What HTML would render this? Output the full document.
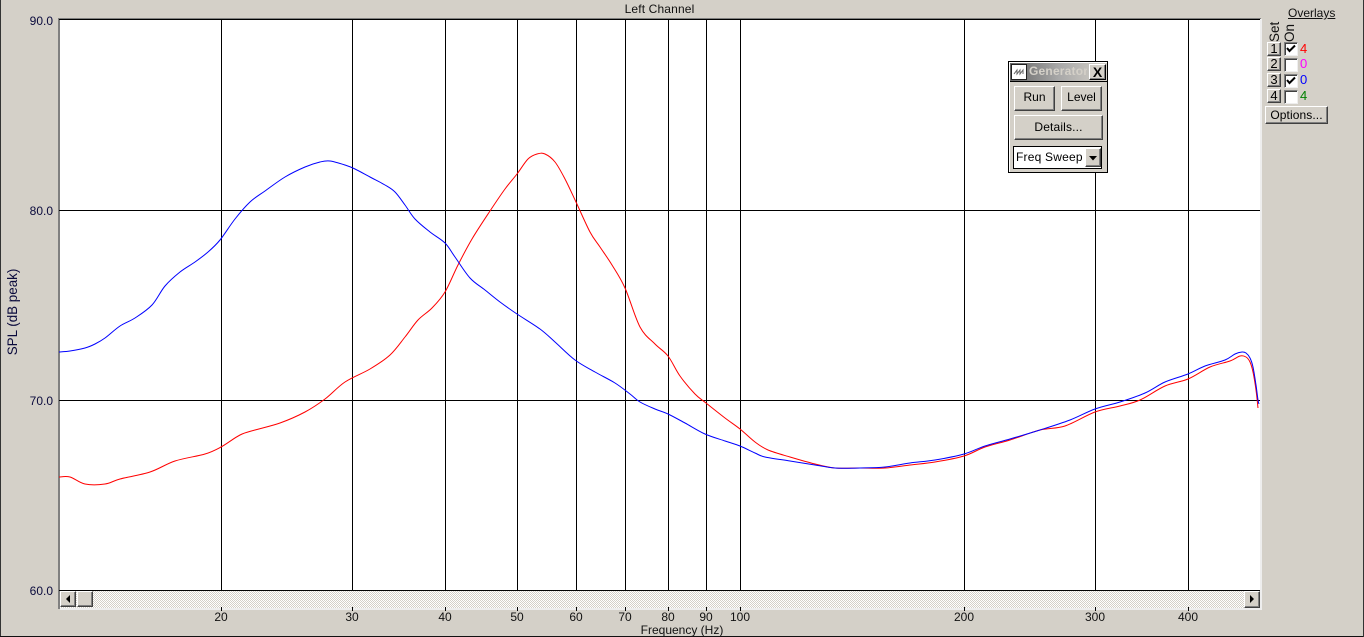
<!DOCTYPE html>
<html><head><meta charset="utf-8"><style>
html,body{margin:0;padding:0}
body{width:1364px;height:637px;overflow:hidden;position:relative;background:#d4d0c8;font:12px "Liberation Sans",Arial,sans-serif;color:#000}
.t{position:absolute;white-space:nowrap;line-height:14px}
.y{width:50px;text-align:right;left:3px;color:#0a0a3c}
.x{width:40px;text-align:center;top:610px;color:#111}
.b{position:absolute;box-sizing:border-box;background:#d4d0c8;border:1px solid;border-color:#fff #404040 #404040 #fff;box-shadow:inset -1px -1px 0 #808080;text-align:center;white-space:nowrap}
.c{position:absolute;left:1284px;width:14px;height:14px;box-sizing:border-box;background:#fff;border:1px solid;border-color:#808080 #eee #eee #808080;box-shadow:inset 1px 1px 0 #404040}
.n{font-size:13px}
</style></head><body>
<div style="position:absolute;left:0;top:0;width:1px;height:637px;background:#333"></div>
<div style="position:absolute;left:0;top:636px;width:1364px;height:1px;background:#111"></div>
<div style="position:absolute;left:1363px;top:0;width:1px;height:637px;background:#333"></div>
<svg width="1364" height="637" style="position:absolute;left:0;top:0">
<defs><pattern id="d" width="2" height="2" patternUnits="userSpaceOnUse"><rect width="2" height="2" fill="#fff"/><rect width="1" height="1" fill="#d4d0c8"/><rect x="1" y="1" width="1" height="1" fill="#d4d0c8"/></pattern></defs>
<rect x="58" y="18" width="2" height="591" fill="#808080"/>
<rect x="58" y="18" width="1203" height="1" fill="#808080"/>
<rect x="60" y="20" width="1200" height="571" fill="#fff"/>
<rect x="1260" y="19" width="2" height="590" fill="#eeeeee"/>
<rect x="60" y="608" width="1202" height="2" fill="#eeeeee"/>
<rect x="60" y="591" width="1200" height="17" fill="url(#d)"/>
<g shape-rendering="crispEdges" stroke="#000" stroke-width="1">
<path d="M59 19.5H1260M59 210.5H1260M59 400.5H1260M59 590.5H1260"/>
<path d="M221.500 20V591M352.500 20V591M445.500 20V591M517.500 20V591M576.500 20V591M625.500 20V591M668.500 20V591M706.500 20V591M740.500 20V591M964.500 20V591M1095.500 20V591M1188.500 20V591"/>
<path d="M221.500 607V611M352.500 607V611M445.500 607V611M517.500 607V611M576.500 607V611M625.500 607V611M668.500 607V611M706.500 607V611M740.500 607V611M964.500 607V611M1095.500 607V611M1188.500 607V611"/>
</g>
<path id="r" fill="none" stroke="#ff0000" stroke-width="1" data-p="59,477 70,477 85,484 105,484 120,479 150,472 175,461 205,454 221,447 240,435 255,430 280,423 305,412 325,399 345,382 370,369 390,355 405,337 418,320 432,308 445,292 458,265 472,239 490,211 505,189 517,174 528,159 537,154 545,154 555,162 565,179 576,202 590,232 600,247 612,265 625,288 640,327 655,344 668,356 680,376 695,394 706,403 725,418 740,429 755,442 768,450 790,457 815,464 835,468 860,468 885,468 910,465 935,462 964,456 985,447 1010,440 1040,430 1065,426 1095,412 1120,406 1140,400 1165,386 1188,379 1210,367 1230,361 1240,356 1246,357 1250,362 1253,372 1256,390 1258,408"/>
<path id="u" fill="none" stroke="#0000ff" stroke-width="1" data-p="59,352 70,351 85,348 95,344 105,338 120,326 135,318 152,305 165,286 180,272 195,262 208,252 220,240 235,219 250,202 265,191 285,177 305,167 320,162 330,161 345,165 355,169 370,177 385,185 395,192 405,205 415,219 430,232 445,243 455,257 470,278 485,290 500,302 517,314 540,329 555,342 575,360 595,372 615,383 630,394 640,402 655,409 668,414 685,423 705,434 725,441 740,446 755,453 765,457 790,461 815,465 835,468 860,468 885,467 910,463 935,460 964,454 985,446 1010,439 1040,430 1070,420 1095,409 1120,402 1145,393 1165,382 1188,374 1205,366 1225,360 1235,354 1242,352 1246,353 1250,358 1253,367 1256,385 1258,400 1259,404"/>
</svg>
<script>
['r','u'].forEach(function(id){var e=document.getElementById(id),p=e.getAttribute('data-p').split(' ').map(function(s){return s.split(',').map(Number)}),d='M'+p[0];
for(var i=0;i<p.length-1;i++){var a=p[i-1]||p[i],b=p[i],c=p[i+1],f=p[i+2]||c;
d+='C'+(b[0]+(c[0]-a[0])/6)+' '+(b[1]+(c[1]-a[1])/6)+' '+(c[0]-(f[0]-b[0])/6)+' '+(c[1]-(f[1]-b[1])/6)+' '+c[0]+' '+c[1];}
e.setAttribute('d',d);e.removeAttribute('data-p');});
</script>

<div class="t" style="left:560px;top:2px;width:199px;text-align:center;color:#111;letter-spacing:.15px">Left Channel</div>
<div class="t y" style="top:14px">90.0</div>
<div class="t y" style="top:204px">80.0</div>
<div class="t y" style="top:394px">70.0</div>
<div class="t y" style="top:584px">60.0</div>
<div class="t" style="left:-37px;top:305px;width:100px;text-align:center;transform:rotate(-90deg);color:#0a0a3c;font-size:13.400px">SPL (dB peak)</div>
<div class="t x" style="left:201px">20</div><div class="t x" style="left:332px">30</div><div class="t x" style="left:425px">40</div><div class="t x" style="left:497px">50</div><div class="t x" style="left:556px">60</div><div class="t x" style="left:605px">70</div><div class="t x" style="left:648px">80</div><div class="t x" style="left:686px">90</div><div class="t x" style="left:720px">100</div><div class="t x" style="left:944px">200</div><div class="t x" style="left:1075px">300</div><div class="t x" style="left:1168px">400</div>
<div class="t" style="left:582px;top:623px;width:200px;text-align:center;color:#111">Frequency (Hz)</div>

<div class="b" style="left:60px;top:591px;width:16px;height:16px"><svg width="14" height="14" style="position:absolute;left:0;top:0"><path d="M9 3V11L5 7Z" fill="#000"/></svg></div>
<div class="b" style="left:77px;top:591px;width:16px;height:16px"></div>
<div class="b" style="left:1244px;top:591px;width:16px;height:17px"><svg width="14" height="14" style="position:absolute;left:0;top:0"><path d="M5 3V11L9 7Z" fill="#000"/></svg></div>

<div style="position:absolute;left:1008px;top:61px;width:100px;height:112px;box-sizing:border-box;background:#d4d0c8;border:1px solid #000;box-shadow:inset 1px 1px 0 #fff">
  <div style="position:absolute;left:1px;top:1px;width:97px;height:18px;background:linear-gradient(90deg,#666,#a8a8a8 50%,#d4d0c8);border-bottom:1px solid #000;box-sizing:content-box"></div>
  <div style="position:absolute;left:2px;top:2px;width:16px;height:16px;background:#fff;border:1px solid #222;box-sizing:border-box"><svg width="14" height="14" style="position:absolute;left:0;top:0"><path d="M2 9L5 5V9L8 5V9L11 5V9" fill="none" stroke="#666" stroke-width="1"/></svg></div>
  <div class="t" style="left:20px;top:2px;font-weight:bold;color:#d4d0c8;width:58px;overflow:hidden;letter-spacing:.2px">Generator</div>
  <div class="b" style="left:80px;top:2px;width:17px;height:16px;line-height:14px;font-size:14px;font-weight:bold;border-color:#fff #000 #000 #fff">X</div>
  <div class="b" style="left:5px;top:24px;width:41px;height:25px;line-height:21px">Run</div>
  <div class="b" style="left:52px;top:24px;width:41px;height:25px;line-height:21px">Level</div>
  <div class="b" style="left:5px;top:53px;width:89px;height:25px;line-height:23px;letter-spacing:.15px">Details...</div>
  <div style="position:absolute;left:4px;top:84px;width:89px;height:23px;box-sizing:border-box;background:#fff;border:1px solid #000;line-height:21px;padding-left:2px;white-space:nowrap;letter-spacing:.2px">Freq Sweep
    <div class="b" style="left:71px;top:1px;width:16px;height:19px"><svg width="14" height="17" style="position:absolute;left:0;top:0"><path d="M3 7H11L7 11.500Z" fill="#000"/></svg></div>
  </div>
</div>

<div class="t" style="left:1288px;top:6px;text-decoration:underline;color:#111">Overlays</div>
<div class="t" style="left:1262px;top:22px;width:26px;text-align:left;transform:rotate(-90deg);color:#111;font-size:13.500px">Set</div>
<div class="t" style="left:1277px;top:22px;width:26px;text-align:left;transform:rotate(-90deg);color:#111;font-size:13.500px">On</div>
<div class="b n" style="left:1267px;top:42px;width:14px;height:14px;line-height:12px">1</div>
<div class="b n" style="left:1267px;top:57px;width:14px;height:14px;line-height:12px">2</div>
<div class="b n" style="left:1267px;top:73px;width:14px;height:14px;line-height:12px">3</div>
<div class="b n" style="left:1267px;top:89px;width:14px;height:14px;line-height:12px">4</div>
<div class="c" style="top:42px"><svg width="12" height="12" style="position:absolute;left:0;top:0"><path d="M2 5L4.500 8L10 2.500" fill="none" stroke="#000" stroke-width="2"/></svg></div>
<div class="c" style="top:58px"></div>
<div class="c" style="top:74px"><svg width="12" height="12" style="position:absolute;left:0;top:0"><path d="M2 5L4.500 8L10 2.500" fill="none" stroke="#000" stroke-width="2"/></svg></div>
<div class="c" style="top:90px"></div>
<div class="t n" style="left:1300px;top:42px;color:#ff0000">4</div>
<div class="t n" style="left:1300px;top:57px;color:#ff00ff">0</div>
<div class="t n" style="left:1300px;top:73px;color:#0000ff">0</div>
<div class="t n" style="left:1300px;top:89px;color:#008000">4</div>
<div class="b" style="left:1265px;top:106px;width:63px;height:18px;line-height:16px;letter-spacing:.1px">Options...</div>
</body></html>
